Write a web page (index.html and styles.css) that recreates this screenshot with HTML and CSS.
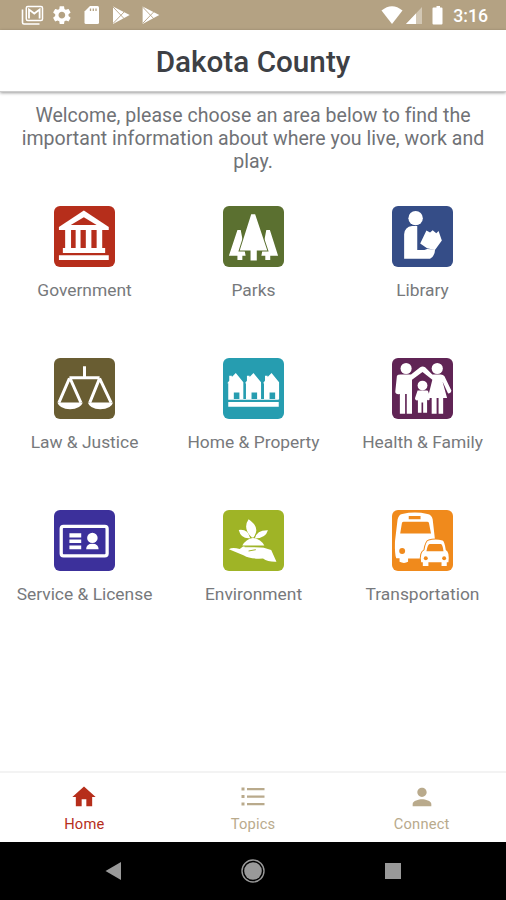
FILE: index.html
```html
<!DOCTYPE html>
<html lang="en">
  <head>
    <meta charset="UTF-8" />
    <meta name="viewport" content="width=device-width, initial-scale=1.0" />
    <title>Dakota County</title>
    <link rel="stylesheet" href="styles.css">
  </head>
  <body>
    <div class="app">
      <div class="status">
        <svg class="status-left" width="180" height="30" viewBox="0 0 180 30">
          <path d="M22.500 9.500V22.500Q22.500 24 24 24H39.500" fill="none" stroke="#fff" stroke-width="1.600" />
          <rect x="26.300" y="6.600" width="16.200" height="13.800" rx="1.500" fill="none" stroke="#fff" stroke-width="1.500" />
          <path d="M29 18.500V9.500L34.300 13.500L39.600 9.500V18.500" fill="none" stroke="#fff" stroke-width="1.800" />
          <path transform="translate(50.700 4) scale(.93)" fill="#fff" d="M19.140 12.940c.04-.3.060-.61.060-.94 0-.32-.02-.64-.07-.94l2.030-1.580c.18-.14.230-.41.120-.61l-1.920-3.320c-.12-.22-.37-.29-.59-.22l-2.390.96c-.5-.38-1.030-.7-1.620-.94l-.36-2.540c-.04-.24-.24-.41-.48-.41h-3.840c-.24 0-.43.170-.47.410l-.36 2.540c-.59.240-1.130.57-1.620.94l-2.390-.96c-.22-.08-.47 0-.59.220L2.740 8.870c-.12.210-.08.470.12.610l2.030 1.580c-.05.300-.09.630-.09.940s.02.640.07.940l-2.030 1.580c-.18.140-.23.410-.12.610l1.920 3.320c.12.220.37.290.59.220l2.390-.96c.5.380 1.030.7 1.620.94l.36 2.540c.05.240.24.410.48.410h3.840c.24 0 .44-.17.470-.41l.36-2.540c.59-.24 1.130-.56 1.620-.94l2.390.96c.22.080.47 0 .59-.22l1.920-3.320c.12-.22.070-.47-.12-.61l-2.010-1.580zM12 15.600c-1.980 0-3.600-1.620-3.600-3.600s1.620-3.600 3.600-3.600 3.600 1.620 3.600 3.600-1.620 3.600-3.600 3.600z" />
          <path d="M90 6H97.500Q99 6 99 7.500V22.500Q99 24 97.500 24H86Q84.500 24 84.500 22.500V11.500Z" fill="#fff" />
          <path d="M90.500 8.500v2.500M93.300 8.500v2.500M96 8.500v2.500" stroke="#b4a283" stroke-width="1.300" />
          <g id="play">
            <path d="M113 6.500L129.700 15L113 24Z" fill="#fff" />
            <path d="M113 7L124.500 19M113 23.500L124.500 11.500" stroke="#b4a283" stroke-width=".9" />
          </g>
          <use href="#play" x="29.600" />
        </svg>
        <div class="status-right">
          <svg width="66" height="30" viewBox="0 0 66 30" fill="#fff">
            <path d="M.5 10.500Q11 2 21.500 10.500L11 24Z" />
            <path d="M41 7V24H25Z" fill-opacity=".4" />
            <path d="M35 13.500V24H25Z" />
            <path d="M55.500 6H59V7.500H60.500Q61.500 7.500 61.500 8.500V23.500Q61.500 24.500 60.500 24.500H52.500Q51.500 24.500 51.500 23.500V8.500Q51.500 7.500 52.500 7.500H55.500Z" />
          </svg>
          <span class="time">3:16</span>
        </div>
      </div>

      <div class="header">Dakota County</div>

      <div class="content">
        <p class="welcome">Welcome, please choose an area below to find the<br>important information about where you live, work and<br>play.</p>
        <div class="grid">
          <a class="item">
            <svg class="tile red" viewBox="27 22 186 186">
              <path d="M42 86L118 36L194 86V95H42Z" />
              <path class="bg" d="M78 80L118 56L157 80Z" />
              <path d="M61 95H79V152H61ZM93 95H108V152H93ZM124 95H141V152H124ZM157 95H174V152H157Z" />
              <path d="M54 150H183V165H54ZM42 172H194V187H42Z" />
            </svg>
            <span>Government</span>
          </a>
          <a class="item">
            <svg class="tile green" viewBox="27 22 186 186">
              <path d="M71 95H81L96 174H86V187H71V174H45ZM159 95H170L195 174H171V187H156V174H144Z" />
              <path class="cut" d="M113 47H125L162 158H130V188H111V158H78Z" />
            </svg>
            <span>Parks</span>
          </a>
          <a class="item">
            <svg class="tile blue" viewBox="27 22 186 186">
              <circle cx="99" cy="59" r="22" />
              <path d="M64 183V108Q66 85 88 83H104V156H126L134 153L158 155Q159 173 143 183Z" />
              <path d="M132 97L143 103L151 96L162 105L169 98L179 127L158 156L134 151L113 136Z" />
            </svg>
            <span>Library</span>
          </a>
          <a class="item">
            <svg class="tile brown" viewBox="27 22 186 186">
              <path d="M37 158H115Q108 178 76 178Q44 178 37 158ZM130 158H207Q202 178 168 178Q136 178 130 158Z" />
              <path class="line" d="M120 47V82M74 82H166M74 84L42 158M76 84L109 158M166 84L136 158M166 84L201 158" />
            </svg>
            <span>Law &amp; Justice</span>
          </a>
          <a class="item">
            <svg class="tile teal" viewBox="27 22 186 186">
              <g id="house">
                <path d="M40 99L46 91V76H54V80L66 68L89 96V147H77V127H60V147H43V99Z" />
              </g>
              <use href="#house" x="54" />
              <use href="#house" x="109" />
              <path d="M43 147H197V149H43ZM43 156H197V171H43Z" />
            </svg>
            <span>Home &amp; Property</span>
          </a>
          <a class="item">
            <svg class="tile purple" viewBox="27 22 186 186">
              <circle cx="70" cy="54" r="17" />
              <circle cx="165" cy="54" r="17" />
              <path d="M42 76Q45 72 53 72H85L113 50Q120 46 128 50L150 72H176Q183 72 187 78L208 121Q207 130 198 130L181 94L195 144H183V192H169V144H163V192H148V144H136L150 88L120 65L88 88V192H72V132H67V192H51V132Q37 134 37 124Z" />
              <circle class="cut" cx="120" cy="106" r="15" />
              <path d="M105 121H135Q140 124 142 148Q139 153 134 149V189H122V158H117V189H106V151Q97 153 97 145Z" />
            </svg>
            <span>Health &amp; Family</span>
          </a>
          <a class="item">
            <svg class="tile indigo" viewBox="27 22 186 186">
              <rect x="49" y="72" width="140" height="90" rx="7" fill="none" stroke="#fff" stroke-width="10" />
              <path d="M74 93H110V106H74ZM74 112H110V123H74ZM74 130H110V142H74Z" />
              <circle cx="144" cy="107" r="16" />
              <path d="M125 142Q125 125 144 125T163 142Z" />
            </svg>
            <span>Service &amp; License</span>
          </a>
          <a class="item">
            <svg class="tile lime" viewBox="27 22 186 186">
              <path d="M115 106Q86 78 105 50Q143 76 120 106ZM110 108Q82 111 75 83Q103 79 110 108ZM124 109Q130 83 164 84Q157 109 124 109Z" />
              <path d="M86 130Q97 110 118 107Q141 110 153 130Z" />
              <path d="M45 142Q55 135 78 141L88 133L149 136L174 144L190 180Q164 181 149 170Q108 172 91 161Z" />
              <path d="M93 134H151M105 147L127 143" fill="none" stroke="#9fb426" stroke-width="3" />
            </svg>
            <span>Environment</span>
          </a>
          <a class="item">
            <svg class="tile orange" viewBox="27 22 186 186">
              <path d="M58 34Q97 25 135 34Q148 36 151 50L158 112V170H76V180Q64 187 50 180V169H40Q35 159 36 118L44 51Q47 36 58 34Z" />
              <path class="bg" d="M78 40H114V50H78ZM62 58H135Q140 58 140 63L146 94H52L57 63Q57 58 62 58Z" />
              <circle class="bg" cx="58" cy="147" r="9" />
              <path class="cut" d="M139 115Q159 109 181 115Q187 117 191 144Q203 150 199 181H194V193H178V181H138V193H121V181H116Q111 152 126 144Q130 117 139 115Z" />
              <path class="bg" d="M142 126H176Q181 126 184 148H132Q136 126 142 126Z" />
              <circle class="bg" cx="130" cy="169" r="6" />
              <circle class="bg" cx="186" cy="169" r="6" />
            </svg>
            <span>Transportation</span>
          </a>
        </div>
      </div>

      <div class="tabs">
        <a class="tab active">
          <svg width="28" height="28" viewBox="0 0 24 24"><path d="M10 20v-6h4v6h5v-8h3L12 3 2 12h3v8z" /></svg>
          <span>Home</span>
        </a>
        <a class="tab">
          <svg width="28" height="28" viewBox="0 0 28 28"><path d="M2.500 4.500h3v3h-3zM8 5h17.500v2.200H8zM2.500 12h3v3h-3zM8 12.500h17.500v2.200H8zM2.500 19.500h3v3h-3zM8 20h17.500v2.200H8z" /></svg>
          <span>Topics</span>
        </a>
        <a class="tab">
          <svg width="30" height="28" viewBox="0 0 24 24"><path d="M12 12c2.210 0 4-1.790 4-4s-1.790-4-4-4-4 1.790-4 4 1.790 4 4 4zm0 2c-2.670 0-8 1.340-8 4v2h16v-2c0-2.660-5.330-4-8-4z" /></svg>
          <span>Connect</span>
        </a>
      </div>

      <div class="navbar">
        <svg width="24" height="24" viewBox="0 0 24 24" fill="#999"><path d="M4.500 12L20 3V21Z" /></svg>
        <svg width="24" height="24" viewBox="0 0 24 24" fill="#999"><circle cx="12" cy="12" r="8.800" /><circle cx="12" cy="12" r="11" fill="none" stroke="#999" stroke-width="1.400" /></svg>
        <svg width="24" height="24" viewBox="0 0 24 24" fill="#999"><rect x="4" y="4" width="16" height="16" /></svg>
      </div>
    </div>
  </body>
</html>
```
FILE: styles.css
```css
body {
  margin: 0;
  background: #fff;
  font-family: Roboto, sans-serif;
}
.app {
  height: 900px;
  display: flex;
  flex-direction: column;
  overflow: hidden;
}
svg {
  display: block;
}
.status {
  height: 30px;
  background: #b4a283;
  display: flex;
  justify-content: space-between;
}
.status-right {
  display: flex;
  padding-right: 18px;
}
.time {
  width: 41px;
  text-align: right;
  color: #fff;
  font-size: 17.7px;
  font-weight: 500;
  line-height: 32px;
}
.header {
  height: 61px;
  line-height: 64px;
  text-align: center;
  font-size: 29.7px;
  font-weight: 500;
  color: #3d4045;
  border-bottom: 1px solid #ccc;
  box-shadow: 0 1px 3px rgba(0, 0, 0, 0.4);
}
.content {
  flex: 1;
}
.welcome {
  margin: 12px 0 0;
  text-align: center;
  white-space: nowrap;
  font-size: 19.5px;
  line-height: 23px;
  letter-spacing: 0.04px;
  color: #707276;
}
.grid {
  display: grid;
  grid-template-columns: repeat(3, 169px);
  grid-auto-rows: 152px;
  margin-top: 33px;
}
.item {
  display: flex;
  flex-direction: column;
  align-items: center;
  font-size: 17.4px;
  line-height: 22px;
  color: #77797c;
}
.item span {
  margin-top: 12px;
}
.tile {
  --bg: #b62e1b;
  width: 61px;
  height: 61px;
  border-radius: 6px;
  background: var(--bg);
  fill: #fff;
}
.bg {
  fill: var(--bg);
}
.cut {
  stroke: var(--bg);
  stroke-width: 6;
  paint-order: stroke;
}
.line {
  fill: none;
  stroke: #fff;
  stroke-width: 9;
}
.green {
  --bg: #5b7030;
}
.blue {
  --bg: #354d87;
}
.brown {
  --bg: #695d32;
}
.teal {
  --bg: #269db0;
}
.purple {
  --bg: #602455;
}
.indigo {
  --bg: #3c309b;
}
.lime {
  --bg: #9fb426;
}
.orange {
  --bg: #f08a1c;
}
.tabs {
  height: 69px;
  display: grid;
  grid-template-columns: repeat(3, 1fr);
  border-top: 2px solid #f3f3f3;
}
.tab {
  display: flex;
  flex-direction: column;
  align-items: center;
  padding-top: 10px;
  font-size: 14.7px;
  line-height: 18px;
  letter-spacing: 0.2px;
  color: #b9aa8c;
  fill: #b9aa8c;
}
.tab span {
  margin-top: 4px;
}
.tab.active {
  color: #b62e1b;
  fill: #b62e1b;
}
.navbar {
  height: 58px;
  background: #000;
  display: flex;
  align-items: center;
  justify-content: center;
  gap: 116px;
}
```
